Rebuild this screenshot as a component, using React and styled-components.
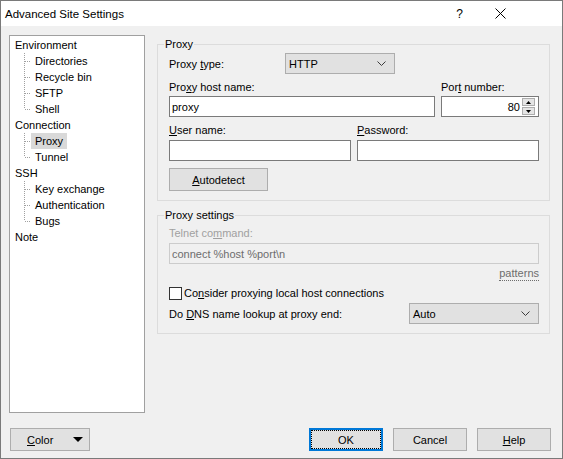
import React from "react";
import styled, { createGlobalStyle } from "styled-components";

const Global = createGlobalStyle`
  html, body { margin: 0; padding: 0; background: #ffffff; }
  * { box-sizing: border-box; }
`;

const FONT = `"Liberation Sans", Arial, sans-serif`;

const Window = styled.div`
  width: 563px;
  height: 459px;
  border: 1px solid #7a7a7a;
  display: flex;
  flex-direction: column;
  background: #f0f0f0;
  font-family: ${FONT};
  font-size: 11px;
  color: #000;
`;

const TitleBar = styled.div`
  height: 25px;
  flex: none;
  background: #ffffff;
  display: flex;
  align-items: center;
  padding-left: 4px;
`;

const TitleText = styled.div`
  flex: 1;
  font-size: 11.5px;
`;

const TitleButton = styled.div`
  width: 41px;
  height: 25px;
  display: flex;
  align-items: center;
  justify-content: center;
  font-size: 12px;
`;

const TitleButtons = styled.div`
  display: flex;
  margin-right: 41px;
`;

const Body = styled.div`
  flex: 1;
  display: flex;
  flex-direction: column;
  padding: 9px 11px 0 8px;
`;

const Main = styled.div`
  display: flex;
  gap: 12px;
  align-items: flex-start;
`;

const Tree = styled.div`
  width: 136px;
  height: 378px;
  flex: none;
  background: #ffffff;
  border: 1px solid #a0a0a0;
  padding-top: 1px;
  display: flex;
  flex-direction: column;
`;

const TreeRow = styled.div`
  height: 16px;
  display: flex;
  align-items: stretch;
  padding-left: ${(p) => (p.$child ? "10px" : "1px")};
`;

const TreeLabel = styled.span`
  line-height: 16px;
  padding: 0 4px;
  background: ${(p) => (p.$selected ? "#d9d9d9" : "transparent")};
`;

const Connector = ({ last }) => (
  <svg width="11" height="16" viewBox="0 0 11 16" style={{ flex: "none" }}>
    <line
      x1="4.5"
      y1="0"
      x2="4.5"
      y2={last ? 8 : 16}
      stroke="#a0a0a0"
      strokeWidth="1"
      strokeDasharray="1 1"
    />
    <line
      x1="5"
      y1="8.5"
      x2="11"
      y2="8.5"
      stroke="#a0a0a0"
      strokeWidth="1"
      strokeDasharray="1 1"
    />
  </svg>
);

const Right = styled.div`
  width: 393px;
  display: flex;
  flex-direction: column;
  padding-top: 2px;
`;

const Group = styled.fieldset`
  margin: ${(p) => p.$mt || 0}px 0 0 0;
  padding: 0;
  border: 1px solid #dcdcdc;
  min-width: 0;
`;

const Legend = styled.legend`
  margin-left: 6px;
  padding: 0 1px;
  line-height: 15px;
  height: 15px;
`;

const GroupBody = styled.div`
  display: flex;
  flex-direction: column;
  padding: ${(p) => p.$pt || 0}px 10px 9px 11px;
`;

const Row = styled.div`
  display: flex;
  align-items: ${(p) => p.$align || "center"};
  justify-content: ${(p) => p.$justify || "flex-start"};
  gap: ${(p) => p.$gap || 0}px;
  margin-top: ${(p) => p.$mt || 0}px;
`;

const Label = styled.div`
  line-height: 14px;
  width: ${(p) => (p.$w ? `${p.$w}px` : "auto")};
  color: ${(p) => (p.$disabled ? "#a0a0a0" : "#000")};
  flex: none;
`;

const Field = styled.div`
  display: flex;
  flex-direction: column;
  width: ${(p) => p.$w}px;
  gap: ${(p) => p.$gap || 2}px;
`;

const Input = styled.div`
  height: 21px;
  width: ${(p) => (p.$w ? `${p.$w}px` : "100%")};
  background: ${(p) => (p.$disabled ? "#f0f0f0" : "#ffffff")};
  border: 1px solid ${(p) => (p.$disabled ? "#cccccc" : "#7a7a7a")};
  color: ${(p) => (p.$disabled ? "#6d6d6d" : "#000")};
  display: flex;
  align-items: center;
  justify-content: ${(p) => (p.$right ? "flex-end" : "flex-start")};
  padding: 0 2px;
  line-height: 14px;
`;

const Spinner = styled.div`
  display: flex;
  flex-direction: column;
  gap: 1px;
  margin-left: 2px;
  margin-right: 1px;
`;

const SpinButton = styled.div`
  width: 13px;
  height: 8px;
  background: #e5e5e5;
  border: 1px solid #adadad;
  display: flex;
  align-items: center;
  justify-content: center;
`;

const Combo = styled.div`
  height: 21px;
  width: ${(p) => p.$w}px;
  background: #e1e1e1;
  border: 1px solid #adadad;
  display: flex;
  align-items: center;
  justify-content: space-between;
  padding: 0 8px 0 3px;
  flex: none;
`;

const Chevron = () => (
  <svg width="9" height="5" viewBox="0 0 9 5">
    <polyline points="0.5,0.5 4.5,4.5 8.5,0.5" fill="none" stroke="#3c3c3c" strokeWidth="1" />
  </svg>
);

const Button = styled.div`
  height: 23px;
  width: ${(p) => p.$w}px;
  background: #e1e1e1;
  border: ${(p) => (p.$default ? "2px solid #0078d7" : "1px solid #adadad")};
  display: flex;
  align-items: center;
  justify-content: center;
  flex: none;
`;

const FocusRing = styled.div`
  width: 100%;
  height: 100%;
  border: 1px dotted #000;
  display: flex;
  align-items: center;
  justify-content: center;
`;

const Mn = styled.span`
  text-decoration: underline;
`;

const LinkText = styled.div`
  align-self: flex-end;
  color: #6d6d6d;
  line-height: 14px;
  border-bottom: 1px dotted #6d6d6d;
  margin-top: 2px;
`;

const Check = styled.div`
  width: 13px;
  height: 13px;
  background: #fff;
  border: 1px solid #333;
  flex: none;
`;

const Footer = styled.div`
  display: flex;
  align-items: center;
  margin-top: 15px;
  padding-left: 1px;
`;

const FooterRight = styled.div`
  margin-left: auto;
  display: flex;
  gap: 10px;
`;

const ColorButton = styled(Button)`
  justify-content: space-between;
  padding: 0 6px 0 16px;
`;

const tree = [
  { label: "Environment" },
  { label: "Directories", child: true },
  { label: "Recycle bin", child: true },
  { label: "SFTP", child: true },
  { label: "Shell", child: true, last: true },
  { label: "Connection" },
  { label: "Proxy", child: true, selected: true },
  { label: "Tunnel", child: true, last: true },
  { label: "SSH" },
  { label: "Key exchange", child: true },
  { label: "Authentication", child: true },
  { label: "Bugs", child: true, last: true },
  { label: "Note" },
];

export default function App() {
  return (
    <>
      <Global />
      <Window>
        <TitleBar>
          <TitleText>Advanced Site Settings</TitleText>
          <TitleButtons>
            <TitleButton>?</TitleButton>
            <TitleButton>
              <svg width="11" height="11" viewBox="0 0 11 11">
                <line x1="0.5" y1="0.5" x2="10.5" y2="10.5" stroke="#000" strokeWidth="1" />
                <line x1="10.5" y1="0.5" x2="0.5" y2="10.5" stroke="#000" strokeWidth="1" />
              </svg>
            </TitleButton>
          </TitleButtons>
        </TitleBar>
        <Body>
          <Main>
            <Tree>
              {tree.map((t) => (
                <TreeRow key={t.label} $child={t.child}>
                  {t.child && <Connector last={t.last} />}
                  <TreeLabel $selected={t.selected}>{t.label}</TreeLabel>
                </TreeRow>
              ))}
            </Tree>
            <Right>
              <Group>
                <Legend>Proxy</Legend>
                <GroupBody $pt={1}>
                  <Row>
                    <Label $w={116}>
                      Proxy <Mn>t</Mn>ype:
                    </Label>
                    <Combo $w={110}>
                      <span>HTTP</span>
                      <Chevron />
                    </Combo>
                  </Row>
                  <Row $gap={6} $mt={6}>
                    <Field $w={266}>
                      <Label>
                        Pro<Mn>x</Mn>y host name:
                      </Label>
                      <Input>proxy</Input>
                    </Field>
                    <Field $w={98}>
                      <Label>
                        Por<Mn>t</Mn> number:
                      </Label>
                      <Input $right>
                        <span>80</span>
                        <Spinner>
                          <SpinButton>
                            <svg width="5" height="3" viewBox="0 0 5 3">
                              <polygon points="2.5,0 5,3 0,3" fill="#000" />
                            </svg>
                          </SpinButton>
                          <SpinButton>
                            <svg width="5" height="3" viewBox="0 0 5 3">
                              <polygon points="0,0 5,0 2.5,3" fill="#000" />
                            </svg>
                          </SpinButton>
                        </Spinner>
                      </Input>
                    </Field>
                  </Row>
                  <Row $gap={6} $mt={6}>
                    <Field $w={182} $gap={3}>
                      <Label>
                        <Mn>U</Mn>ser name:
                      </Label>
                      <Input />
                    </Field>
                    <Field $w={182} $gap={3}>
                      <Label>
                        <Mn>P</Mn>assword:
                      </Label>
                      <Input />
                    </Field>
                  </Row>
                  <Row $mt={7}>
                    <Button $w={99}>
                      <span>
                        <Mn>A</Mn>utodetect
                      </span>
                    </Button>
                  </Row>
                </GroupBody>
              </Group>
              <Group $mt={7}>
                <Legend>Proxy settings</Legend>
                <GroupBody $pt={3}>
                  <Field $w={370} $gap={3}>
                    <Label $disabled>
                      Telnet co<Mn>m</Mn>mand:
                    </Label>
                    <Input $disabled>connect %host %port\n</Input>
                  </Field>
                  <LinkText>patterns</LinkText>
                  <Row $gap={2} $mt={5}>
                    <Check />
                    <Label>
                      Co<Mn>n</Mn>sider proxying local host connections
                    </Label>
                  </Row>
                  <Row $justify="space-between" $mt={3}>
                    <Label>
                      Do <Mn>D</Mn>NS name lookup at proxy end:
                    </Label>
                    <Combo $w={130}>
                      <span>Auto</span>
                      <Chevron />
                    </Combo>
                  </Row>
                </GroupBody>
              </Group>
            </Right>
          </Main>
          <Footer>
            <ColorButton $w={80}>
              <span>
                <Mn>C</Mn>olor
              </span>
              <svg width="10" height="5" viewBox="0 0 10 5">
                <polygon points="0,0 10,0 5,5" fill="#000" />
              </svg>
            </ColorButton>
            <FooterRight>
              <Button $w={74} $default>
                <FocusRing>OK</FocusRing>
              </Button>
              <Button $w={74}>Cancel</Button>
              <Button $w={74}>
                <span>
                  <Mn>H</Mn>elp
                </span>
              </Button>
            </FooterRight>
          </Footer>
        </Body>
      </Window>
    </>
  );
}
